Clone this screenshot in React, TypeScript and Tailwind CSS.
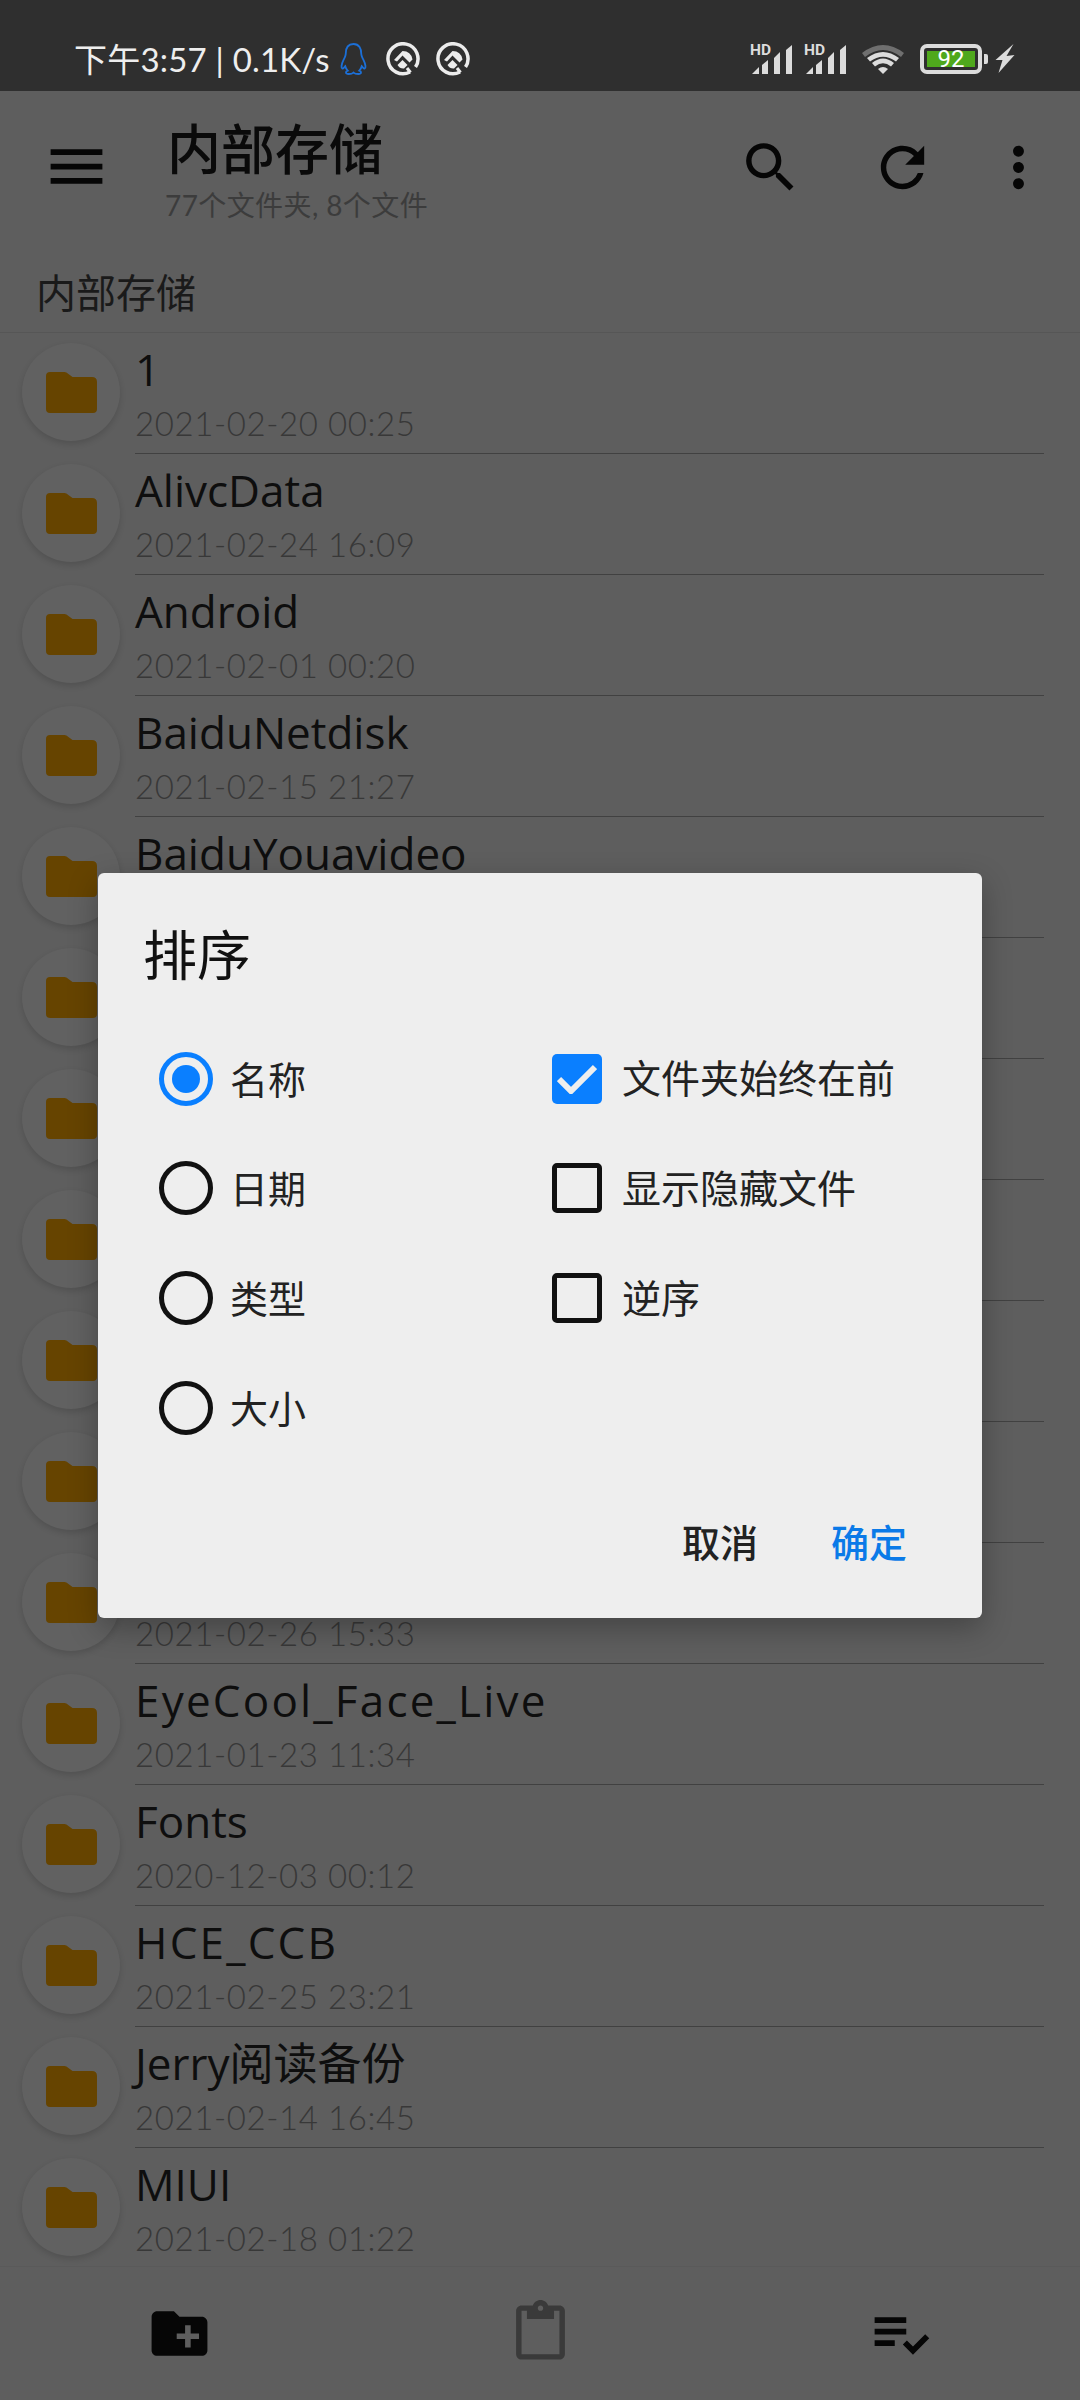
import { MdSearch, MdRefresh, MdMoreVert, MdMenu, MdCreateNewFolder, MdContentPaste, MdPlaylistAddCheck } from 'react-icons/md';

// titles of the rows hidden behind the dialog can't be read in the picture, so they stay blank
const folders = [
  { name: '1', date: '2021-02-20 00:25' },
  { name: 'AlivcData', date: '2021-02-24 16:09' },
  { name: 'Android', date: '2021-02-01 00:20' },
  { name: 'BaiduNetdisk', date: '2021-02-15 21:27' },
  { name: 'BaiduYouavideo', date: '' },
  { name: '', date: '' },
  { name: '', date: '' },
  { name: '', date: '' },
  { name: '', date: '' },
  { name: '', date: '' },
  { name: '', date: '2021-02-26 15:33' },
  { name: 'EyeCool_Face_Live', date: '2021-01-23 11:34' },
  { name: 'Fonts', date: '2020-12-03 00:12' },
  { name: 'HCE_CCB', date: '2021-02-25 23:21' },
  { name: 'Jerry阅读备份', date: '2021-02-14 16:45' },
  { name: 'MIUI', date: '2021-02-18 01:22' },
];

const sortOptions = [
  { label: '名称', checked: true },
  { label: '日期', checked: false },
  { label: '类型', checked: false },
  { label: '大小', checked: false },
];

const viewOptions = [
  { label: '文件夹始终在前', checked: true },
  { label: '显示隐藏文件', checked: false },
  { label: '逆序', checked: false },
];

function Signal() {
  return (
    <svg className="-mt-[5px]" width="42" height="36" viewBox="0 -5 42 36">
      <text x="0" y="11" fontSize="15.5" fontWeight="700" fill="#dcdcdc" fontFamily="Roboto, sans-serif">HD</text>
      <path d="M2 30 L9 23 V30 Z" fill="#dcdcdc" />
      <path d="M12 21 L18 16 V30 H12 Z" fill="#dcdcdc" />
      <path d="M24 14 L30 8 V30 H24 Z" fill="#dcdcdc" />
      <path d="M36 6 L42 1 V30 H36 Z" fill="#dcdcdc" />
    </svg>
  );
}

function Wifi() {
  return (
    <svg width="42" height="32" viewBox="0 0 42 32">
      <path d="M0 10 Q21 -6 42 10 L39 14 Q21 0 3 14 Z" fill="#6f6f6f" />
      <path d="M5 15 Q21 3 37 15 L34 18.500 Q21 9 8 18.500 Z" fill="#dcdcdc" />
      <path d="M10 20 Q21 11 32 20 L29 23.500 Q21 17 13 23.500 Z" fill="#dcdcdc" />
      <path d="M16 26 Q21 22 26 26 L21 31 Z" fill="#dcdcdc" />
    </svg>
  );
}

function QQ() {
  return (
    <svg width="29" height="32" viewBox="0 0 28 33" fill="none" stroke="#1c6fd6" strokeWidth="1.9">
      <path d="M14 1 C8 1 6 6 6 11 C6 13 5 15 3.500 18 C1.500 22 1 26 2.500 26.500 C3.500 26.500 4.500 25 5.500 24 C6 26 7 27.500 8 28.500 C5.500 29.500 5.500 32 9 32 C11 32 13 31.500 14 30.500 C15 31.500 17 32 19 32 C22.500 32 22.500 29.500 20 28.500 C21 27.500 22 26 22.500 24 C23.500 25 24.500 26.500 25.500 26.500 C27 26 26.500 22 24.500 18 C23 15 22 13 22 11 C22 6 20 1 14 1 Z" />
    </svg>
  );
}

function RingIcon() {
  return (
    <svg width="34" height="34" viewBox="0 0 34 34" fill="none">
      <path d="M24 30 A15 15 0 1 1 29.500 25" stroke="#ececec" strokeWidth="3.500" />
      <path d="M24.500 30.500 L21 26" stroke="#ececec" strokeWidth="3" />
      <path d="M8 18 L16.500 9 Q25 9 26.500 17.500 L23.500 20.500 L16.500 13.500 L11 19.500 Z" fill="#ececec" />
      <path d="M11.500 23 L16.500 18 L21.500 23 L18 26.500 Q14 27 11.500 23 Z" fill="#ececec" />
    </svg>
  );
}

function StatusBar() {
  return (
    <div className="h-[91px] shrink-0 bg-[#2f2f2f] flex items-center pt-[27px] pl-[74px] text-[#eeeeee]">
      <span className="text-[33px] leading-none tracking-[0.2px] whitespace-pre font-['Lato','Noto_Sans_CJK_SC',sans-serif]">下午3:57 | 0.1K/s</span>
      <div className="ml-[9px]"><QQ /></div>
      <div className="ml-[18px]"><RingIcon /></div>
      <div className="ml-[16px]"><RingIcon /></div>
      <div className="ml-auto flex items-center pr-[65px]">
        <Signal />
        <div className="ml-[12px]"><Signal /></div>
        <div className="ml-[16px]"><Wifi /></div>
        <div className="ml-[16px] w-[62px] h-[30px] rounded-[7px] border-[4px] border-[#dcdcdc] p-[3px] flex">
          <div className="flex-1 bg-[#4fa81c] flex items-center justify-center text-white text-[24px] leading-none font-['Roboto',sans-serif]">92</div>
        </div>
        <div className="ml-[2px] w-[4px] h-[10px] rounded-r-[2px] bg-[#dcdcdc]" />
        <svg className="ml-[7px]" width="20" height="30" viewBox="0 0 19 30">
          <path d="M18 0 L11 12 L19 11 L3 29 L7 16 L0 16 Z" fill="#dcdcdc" />
        </svg>
      </div>
    </div>
  );
}

function Toolbar() {
  return (
    <div className="h-[169px] shrink-0 flex items-start pt-[28px] pl-[42px] font-['Lato','Noto_Sans_CJK_SC',sans-serif]">
      <MdMenu size={69} className="mt-[13px] text-[#060606]" />
      <div className="ml-[56px] flex flex-col">
        <span className="text-[54px] leading-[62px] font-medium text-[#0a0a0a]">内部存储</span>
        <span className="mt-[8px] text-[28px] leading-[32px] tracking-[0.4px] text-[#3c3c3c] -ml-[2px]">77个文件夹, 8个文件</span>
      </div>
      <MdSearch size={65} className="ml-auto mt-[16px] text-[#060606]" />
      <MdRefresh size={65} className="ml-[67px] mt-[16px] text-[#060606]" />
      <MdMoreVert size={65} className="ml-[51px] mr-[29px] mt-[16px] text-[#060606]" />
    </div>
  );
}

function FolderRow({ name, date }: { name: string; date: string }) {
  // the underscore is much wider in the original font
  const nameSpacing = name.includes('_') ? 'tracking-[2.2px]' : 'tracking-normal';

  return (
    <div className="h-[121px] shrink-0 flex relative">
      <div className="ml-[22px] mt-[10px] w-[98px] h-[98px] rounded-full bg-[#616161] shadow-[0_3px_6px_rgba(0,0,0,0.14)] flex items-center justify-center">
        <svg width="51" height="41" viewBox="0 0 50 41" preserveAspectRatio="none">
          <path d="M4 0 H18 Q20 0 22 2 L26 5 H45 Q50 5 50 10 V37 Q50 41 46 41 H4 Q0 41 0 37 V4 Q0 0 4 0 Z" fill="#664400" />
        </svg>
      </div>
      <div className="ml-[15px] flex-1 mr-[36px] flex flex-col border-b border-[#414141]">
        <span className={`h-[56px] mt-[8px] text-[44px] leading-[56px] text-[#0e0e0e] whitespace-nowrap font-['Open_Sans','Noto_Sans_CJK_SC',sans-serif] ${nameSpacing}`}>{name}</span>
        <span className="h-[40px] mt-[6px] text-[33px] leading-[40px] font-light tracking-[0.6px] text-[#383838] font-['Lato',sans-serif]">{date}</span>
      </div>
    </div>
  );
}

function SortDialog() {
  return (
    <div className="absolute left-[98px] top-[873px] w-[884px] h-[745px] rounded-[6px] bg-[#eeeeee] shadow-[0_10px_30px_rgba(0,0,0,0.28)] font-['Lato','Noto_Sans_CJK_SC',sans-serif]">
      <div className="pt-[53px] pl-[45px] text-[54px] leading-[60px] text-[#111111]">排序</div>
      <div className="mt-[38px] flex">
        <div className="w-[454px] pl-[61px] flex flex-col">
          {sortOptions.map((option) => (
            <div key={option.label} className="h-[109.67px] flex items-center">
              <div className={option.checked
                ? 'w-[54px] h-[54px] rounded-full border-[5px] border-[#0a7fff] flex items-center justify-center'
                : 'w-[54px] h-[54px] rounded-full border-[5px] border-[#111111]'}>
                {option.checked && <div className="w-[28px] h-[28px] rounded-full bg-[#0a7fff]" />}
              </div>
              <span className="ml-[17px] text-[38px] leading-none text-[#222222]">{option.label}</span>
            </div>
          ))}
        </div>
        <div className="flex flex-col">
          {viewOptions.map((option) => (
            <div key={option.label} className="h-[109.67px] flex items-center">
              {option.checked ? (
                <div className="w-[50px] h-[50px] rounded-[5px] bg-[#0a7fff] flex items-center justify-center">
                  <svg width="40" height="30" viewBox="0 0 40 30">
                    <path d="M2 15 L14 27 L38 3" stroke="#eeeeee" strokeWidth="6" fill="none" />
                  </svg>
                </div>
              ) : (
                <div className="w-[50px] h-[50px] rounded-[5px] border-[5px] border-[#111111]" />
              )}
              <span className="ml-[20px] text-[39px] leading-none text-[#222222]">{option.label}</span>
            </div>
          ))}
        </div>
      </div>
      <div className="mt-[57px] pr-[75px] flex justify-end gap-[73px] text-[38px] leading-[44px] font-medium">
        <span className="text-[#222222]">取消</span>
        <span className="text-[#0a7ae8]">确定</span>
      </div>
    </div>
  );
}

export default function App() {
  return (
    <div className="relative w-[1080px] h-[2400px] overflow-hidden bg-[#5e5e5e] flex flex-col">
      <StatusBar />
      <Toolbar />

      {/* Breadcrumb */}
      <div className="h-[73px] shrink-0 pl-[36px] pt-[8px] border-b border-[#565656] text-[40px] leading-[50px] text-[#1a1a1a] font-['Lato','Noto_Sans_CJK_SC',sans-serif]">
        内部存储
      </div>

      {/* File list */}
      <div className="h-[1934px] shrink-0 flex flex-col overflow-hidden border-b border-[#5a5a5a]">
        {folders.map((folder, index) => (
          <FolderRow key={index} name={folder.name} date={folder.date} />
        ))}
      </div>

      {/* Bottom actions */}
      <div className="flex-1 flex items-start pt-[33px] pl-[146px]">
        <MdCreateNewFolder size={67} className="text-[#060606]" />
        <MdContentPaste size={65} className="ml-[295px] text-[#3a3a3a]" />
        <MdPlaylistAddCheck size={69} className="ml-[293px] text-[#060606]" />
      </div>

      <SortDialog />
    </div>
  );
}
